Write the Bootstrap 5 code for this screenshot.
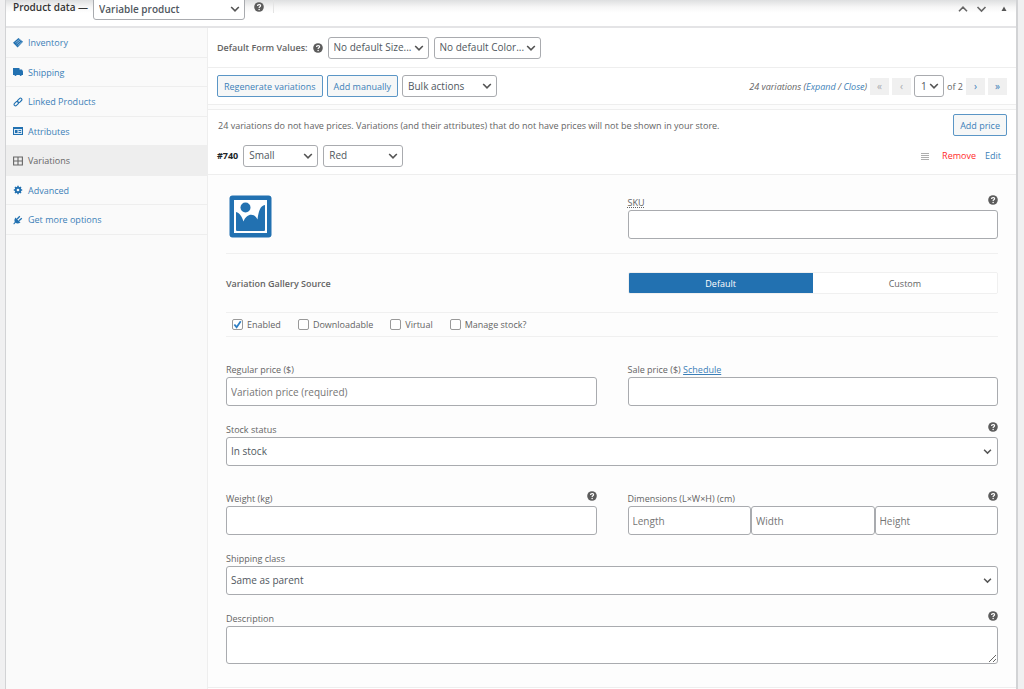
<!DOCTYPE html>
<html lang="en">
<head>
<meta charset="utf-8">
<meta name="viewport" content="width=device-width, initial-scale=1">
<title>Product data</title>
<link href="https://cdn.jsdelivr.net/npm/bootstrap@5.3.0/dist/css/bootstrap.min.css" rel="stylesheet">
<style>
:root { --ui-blue: #2271b1; --ui-line: #eeeeee; --ui-border: #a9abaf; }
body { background: #f0f0f1; color: #646464; font-family: "Open Sans", sans-serif; font-size: 9px; line-height: 15px; }
a { color: #3c7fb8; text-decoration: none; }
.panel { background: #fff; border: solid #d2d3d5; border-width: 0 2px 0 1px; margin: 0 6px 0 5px; }
.panel-head { height: 28px; padding: 0 8px 0 7px; border-bottom: 2px solid #e4e4e6; background: linear-gradient(#dedfe0, #f6f6f6 7px, #fff 13px); color: #333; }
.panel-head .form-select { height: 22px; margin: -2px 9px 0 5px; width: 152px; font-weight: 600; border-radius: 0 0 3px 3px; }
.panel-head .help { margin-top: 2px; }
.divider { width: 1px; height: 13px; margin-left: 9px; background: #e4e4e4; }
.top-label { font-weight: 600; font-size: 10px; }
.form-select, .form-control { font-size: 10px; line-height: 15px; color: #50575e; border-color: var(--ui-border); border-radius: 3px; background-color: #fff; }
.form-select { width: auto; height: 22px; padding: 0 14px 0 5px; background-image: url("data:image/svg+xml,%3Csvg xmlns='http://www.w3.org/2000/svg' viewBox='0 0 10 10'%3E%3Cpath d='M1.2 3l3.8 3.8L8.8 3' fill='none' stroke='%23555' stroke-width='1.6'/%3E%3C/svg%3E"); background-size: 10px 10px; background-position: right 4px center; }
.form-control, .full { height: 29px; padding: 0 4px; width: 100%; }
.full { background-size: 9px 9px; background-position: right 5px center; }
.form-control::placeholder { color: #757575; }
.help { width: 10px; height: 10px; flex: none; display: block; }
.side { width: 202px; background: #fafafa; border-right: 1px solid var(--ui-line); flex: none; }
.side a { display: flex; align-items: center; gap: 5px; height: 30px; padding: 0 7px; border-bottom: 1px solid var(--ui-line); }
.side li:nth-child(even) a { height: 29px; }
.side a.current { background: #eeeeee; color: #666; }
.side svg { width: 10px; height: 10px; flex: none; }
.bar { padding: 0 9px; border-bottom: 1px solid var(--ui-line); }
.bar-defaults { height: 40px; gap: 5px; }
.bar-actions { height: 37px; }
.bar-notice { height: 30px; border: 0; padding-left: 10px; }
.bar-row { height: 35px; gap: 5px; padding: 0 15px 3px 9px; }
.strip { height: 5px; background: #fcfcfc; border-bottom: 1px solid var(--ui-line); }
.btn-ui { height: 22px; padding: 0 6px; font-size: 9px; line-height: 15px; border: 1px solid #5b96c6; border-radius: 2px; background: #f6f7f7; color: #3c7fb8; }
.pager-btn { width: 19px; height: 17px; border: 0; padding: 0; background: #f0f0f0; color: #3c7fb8; font-size: 10px; line-height: 15px; }
.pager-btn:disabled { color: #a7aaad; }
.w-size { width: 101px; } .w-color { width: 107px; } .w-bulk { width: 95px; } .w-one { width: 75px; } .w-two { width: 80px; } .w-page { width: 30px; padding-left: 6px; }
.content { background: #fdfdfd; padding: 20px 18px 23px; border-bottom: 1px solid var(--ui-line); }
.content .row { --bs-gutter-x: 31px; }
.thumb { width: 43px; height: 43px; margin-left: 3px; display: block; }
.rule { border-bottom: 1px solid #f0f0f0; }
.first-rule { height: 15px; }
.field-head { display: flex; justify-content: space-between; height: 15px; }
.field { margin-top: 16px; }
.apart { margin-top: 25px; }
.gallery { height: 58px; align-items: center; }
.seg { height: 22px; border: 1px solid #f0f0f0; border-radius: 2px; overflow: hidden; }
.seg button { flex: 1; border: 0; padding: 0; background: #fff; color: #646464; line-height: 15px; }
.seg .on { background: var(--ui-blue); color: #fff; }
.checks { height: 24px; padding-left: 6px; gap: 17px; }
.checks label { display: flex; align-items: center; gap: 4px; }
.checks input { appearance: none; width: 11px; height: 11px; margin: 0; border: 1px solid #999; border-radius: 2px; background: #fff center/9px no-repeat; }
.checks input:checked { background-image: url("data:image/svg+xml,%3Csvg xmlns='http://www.w3.org/2000/svg' viewBox='0 0 10 10'%3E%3Cpath d='M1.5 5l2.5 3L8.6 1.5' fill='none' stroke='%232f7fc4' stroke-width='2'/%3E%3C/svg%3E"); }
.remove { color: #ff2a2a; }
.links { gap: 9px; }
.tools { gap: 4px; }
.pager { gap: 3px; }
.desc { height: 38px; resize: vertical; }
</style>
</head>
<body>
<svg class="d-none" aria-hidden="true">
  <symbol id="q" viewBox="0 0 10 10"><circle cx="5" cy="5" r="4.8" fill="#5c5c5c"/><path d="M3.5 3.9C3.5 2.1 6.6 2.1 6.6 3.8 6.6 4.9 5.1 4.8 5.1 6" fill="none" stroke="#fff" stroke-width="1.2"/><circle cx="5.1" cy="7.5" r=".75" fill="#fff"/></symbol>
</svg>
<main class="panel min-vh-100 d-flex flex-column">
  <header class="panel-head d-flex">
    <label class="top-label" for="ptype">Product data —</label>
    <select id="ptype" class="form-select"><option>Variable product</option></select>
    <svg class="help"><use href="#q"/></svg>
    <span class="divider"></span>
    <span class="ms-auto d-flex align-items-start pt-1">
      <svg width="50" height="10" viewBox="0 0 50 10" fill="none" stroke="#666" stroke-width="1.6"><path d="M1 7.2l4-4 4 4M19.500 3l4 4 4-4"/><path d="M43.500 7h5L46 2.500z" fill="#555" stroke="none"/></svg>
    </span>
  </header>
  <div class="d-flex flex-grow-1">
    <nav class="side">
      <ul class="list-unstyled m-0">
        <li><a href="#"><svg viewBox="0 0 10 10"><path d="M5.500 0L10 3.800 4.600 9.500 0 4.800z" fill="#2271b1"/><path d="M2.500 4.500l4-3M3.500 6l4-3.500M4.700 7.500l4-3.500" stroke="#b5cfe5" stroke-width=".7"/></svg>Inventory</a></li>
        <li><a href="#"><svg viewBox="0 0 10 10"><path d="M0 1h6.500v1.500H9L10 4.500V8H0z" fill="#2271b1"/><circle cx="2.500" cy="8" r="1" fill="#2271b1"/><circle cx="7.700" cy="8" r="1" fill="#2271b1"/></svg>Shipping</a></li>
        <li><a href="#"><svg viewBox="0 0 10 10" fill="none" stroke="#2271b1" stroke-width="1.100"><rect x="4.200" y="1.900" width="5" height="2.800" rx="1.400" transform="rotate(-45 6.700 3.300)"/><rect x=".8" y="5.200" width="5" height="2.800" rx="1.400" transform="rotate(-45 3.300 6.600)"/></svg>Linked Products</a></li>
        <li><a href="#"><svg viewBox="0 0 10 10"><path d="M0 1h10v8H0z" fill="#2271b1"/><path d="M1 3h8v5H1z" fill="#dce9f4"/><path d="M2 4h2.500v3H2zM5.500 4h2.700v1H5.500zM5.500 6h2.700v1H5.500z" fill="#2271b1"/></svg>Attributes</a></li>
        <li><a href="#" class="current"><svg viewBox="0 0 10 10" fill="none" stroke="#666" stroke-width="1.100"><path d="M.6 1h8.800v8H.6zM5 1v8M.6 5h8.800"/></svg>Variations</a></li>
        <li><a href="#"><svg viewBox="0 0 10 10" fill="none" stroke="#2271b1"><circle cx="5" cy="5" r="2.300" stroke-width="1.900"/><path d="M5 .8v1.500M5 7.700v1.500M.8 5h1.500M7.700 5h1.500M2 2l1.200 1.200M6.800 6.800L8 8M2 8l1.200-1.200M6.800 3.200L8 2" stroke-width="1.500"/></svg>Advanced</a></li>
        <li><a href="#"><svg viewBox="0 0 10 10"><path d="M2.500 2.500l5 5C5.500 8.800 3.500 8.600 2.600 7.800L1 9.400.3 8.700 1.800 7C1.200 5.800 1.300 4 2.500 2.500z" fill="#2271b1"/><path d="M4.200 4L6.800 1.200M6 5.800L8.800 3.200" stroke="#2271b1" stroke-width="1.300"/></svg>Get more options</a></li>
      </ul>
    </nav>
    <section class="flex-grow-1">
      <div class="bar bar-defaults d-flex align-items-center">
        <b class="fw-semibold">Default Form Values:</b>
        <svg class="help"><use href="#q"/></svg>
        <select class="form-select w-size" aria-label="Default size"><option>No default Size...</option></select>
        <select class="form-select w-color" aria-label="Default color"><option>No default Color...</option></select>
      </div>
      <div class="bar bar-actions d-flex align-items-center justify-content-between">
        <div class="tools d-flex align-items-center">
          <button class="btn btn-ui">Regenerate variations</button>
          <button class="btn btn-ui">Add manually</button>
          <select class="form-select w-bulk" aria-label="Bulk actions"><option>Bulk actions</option></select>
        </div>
        <div class="pager d-flex align-items-center">
          <em>24 variations (<a href="#">Expand</a> / <a href="#">Close</a>)</em>
          <button class="pager-btn" disabled aria-label="First page">«</button>
          <button class="pager-btn" disabled aria-label="Previous page">‹</button>
          <select class="form-select w-page" aria-label="Page"><option>1</option></select>
          <span>of 2</span>
          <button class="pager-btn" aria-label="Next page">›</button>
          <button class="pager-btn" aria-label="Last page">»</button>
        </div>
      </div>
      <div class="strip"></div>
      <div class="bar bar-notice d-flex align-items-center justify-content-between">
        <span>24 variations do not have prices. Variations (and their attributes) that do not have prices will not be shown in your store.</span>
        <button class="btn btn-ui">Add price</button>
      </div>
      <div class="bar bar-row d-flex align-items-center">
        <b class="text-dark">#740</b>
        <select class="form-select w-one" aria-label="Size"><option>Small</option></select>
        <select class="form-select w-two" aria-label="Color"><option>Red</option></select>
        <div class="links d-flex align-items-center ms-auto">
          <svg class="me-1" width="8" height="8" viewBox="0 0 8 8" stroke="#999"><path d="M0 1.500h8M0 3.500h8M0 5.500h8M0 7.500h8" stroke-width=".8"/></svg>
          <a href="#" class="remove">Remove</a>
          <a href="#">Edit</a>
        </div>
      </div>
      <div class="content">
        <div class="row">
          <div class="col-6"><svg class="thumb" viewBox="0 0 43 43"><rect x=".5" y=".5" width="42" height="42" rx="3" fill="#2271b1"/><path d="M5 5h33v33H5z" fill="#fff"/><circle cx="16.500" cy="12.500" r="5" fill="#2271b1"/><path d="M7 17c4 1 6 5 7.500 9.500 3-8.500 11-9 14-2C29.500 17 31 10.500 36 10v24.500c0 1-.5 1.500-1.500 1.500H8.500C7.500 36 7 35.500 7 34.500z" fill="#2271b1"/></svg></div>
          <div class="col-6"><div class="field-head"><label for="sku"><abbr title="Stock Keeping Unit">SKU</abbr></label><svg class="help"><use href="#q"/></svg></div><input id="sku" class="form-control"></div>
        </div>
        <div class="rule first-rule"></div>
        <div class="row gallery">
          <div class="col-6"><b class="fw-semibold">Variation Gallery Source</b></div>
          <div class="col-6"><div class="seg d-flex"><button class="on">Default</button><button>Custom</button></div></div>
        </div>
        <div class="rule"></div>
        <div class="checks rule d-flex align-items-center">
          <label><input type="checkbox" checked>Enabled</label>
          <label><input type="checkbox">Downloadable</label>
          <label><input type="checkbox">Virtual</label>
          <label><input type="checkbox">Manage stock?</label>
        </div>
        <div class="row apart">
          <div class="col-6"><div class="field-head"><label for="rp">Regular price ($)</label></div><input id="rp" class="form-control" placeholder="Variation price (required)"></div>
          <div class="col-6"><div class="field-head"><label for="sp">Sale price ($) <a href="#" class="text-decoration-underline">Schedule</a></label></div><input id="sp" class="form-control"></div>
        </div>
        <div class="field"><div class="field-head"><label for="ss">Stock status</label><svg class="help"><use href="#q"/></svg></div><select id="ss" class="form-select full"><option>In stock</option></select></div>
        <div class="row apart">
          <div class="col-6"><div class="field-head"><label for="wt">Weight (kg)</label><svg class="help"><use href="#q"/></svg></div><input id="wt" class="form-control"></div>
          <div class="col-6"><div class="field-head"><label for="len">Dimensions (L×W×H) (cm)</label><svg class="help"><use href="#q"/></svg></div>
            <div class="d-flex"><input id="len" class="form-control" placeholder="Length"><input class="form-control" placeholder="Width" aria-label="Width"><input class="form-control" placeholder="Height" aria-label="Height"></div></div>
        </div>
        <div class="field"><div class="field-head"><label for="sc">Shipping class</label></div><select id="sc" class="form-select full"><option>Same as parent</option></select></div>
        <div class="field"><div class="field-head"><label for="ds">Description</label><svg class="help"><use href="#q"/></svg></div><textarea id="ds" class="form-control desc d-block"></textarea></div>
      </div>
    </section>
  </div>
</main>
<script src="https://cdn.jsdelivr.net/npm/bootstrap@5.3.0/dist/js/bootstrap.bundle.min.js"></script>
</body>
</html>
